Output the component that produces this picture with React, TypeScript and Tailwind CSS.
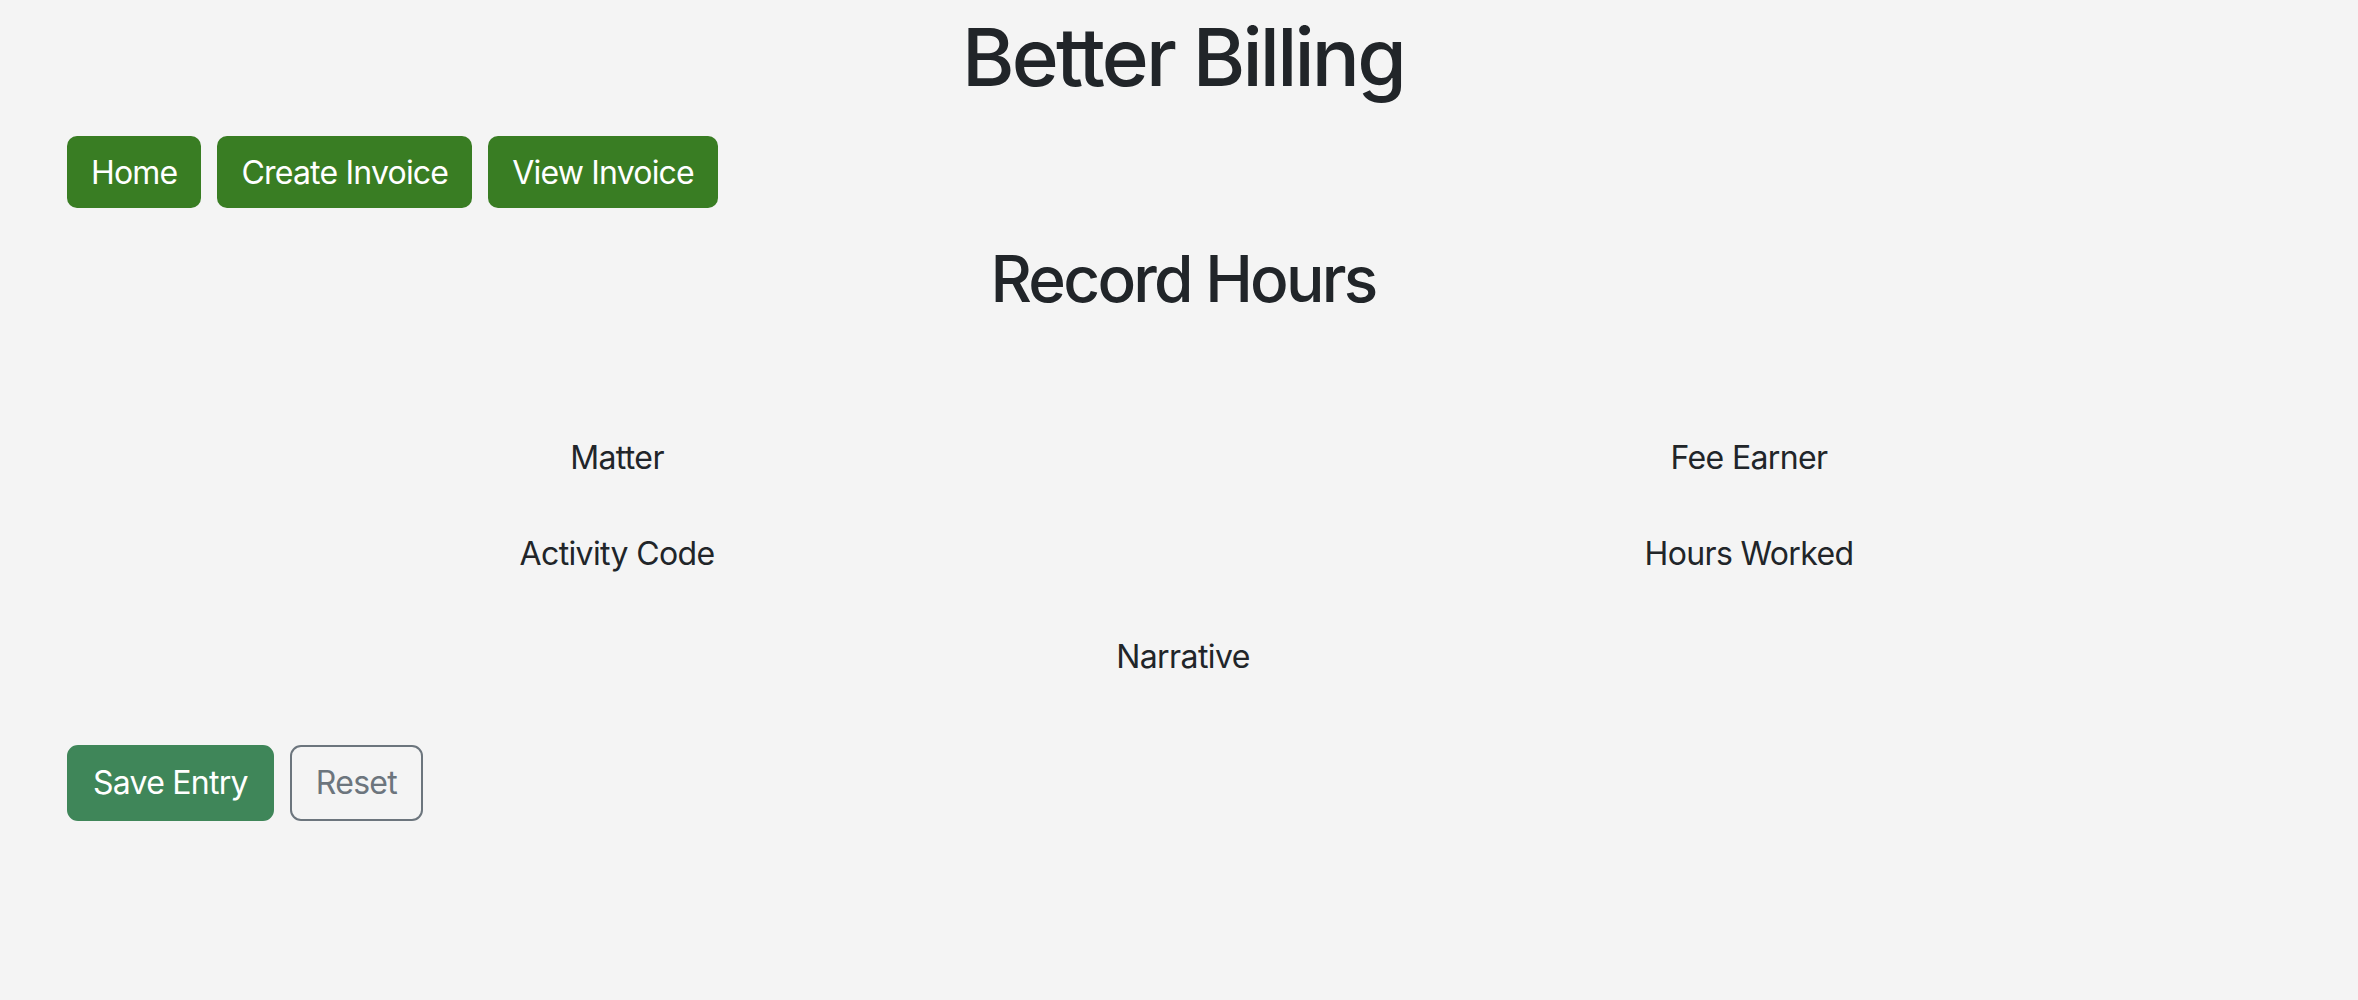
import React from "react";

const font = { fontFamily: "Inter, 'Noto Sans', 'Liberation Sans', sans-serif" };

export default function App() {
  return (
    <div
      className="min-h-screen bg-[#f4f4f4] text-[#212529] pl-[67px] pr-[59px]"
      style={font}
    >
      <h1 className="pt-[9px] mb-[31px] text-center text-[80px] leading-[96px] font-medium tracking-[-0.035em]">
        Better Billing
      </h1>
      <nav className="flex gap-4">
        {["Home", "Create Invoice", "View Invoice"].map((t) => (
          <button
            key={t}
            className="h-[72px] px-6 pt-[2px] rounded-[10px] bg-[#397d23] text-white text-[32px] leading-[48px] tracking-[-0.025em]"
          >
            {t}
          </button>
        ))}
      </nav>
      <h2 className="mt-[32px] text-center text-[64px] leading-[77px] font-medium tracking-[-0.043em]">
        Record Hours
      </h2>
      <div className="mt-[117px] grid grid-cols-2 gap-x-8 gap-y-[48px] text-[32px] leading-[48px] tracking-[-0.02em]">
        <div className="text-center">Matter</div>
        <div className="text-center">Fee Earner</div>
        <div className="text-center">Activity Code</div>
        <div className="text-center">Hours Worked</div>
      </div>
      <div className="mt-[55px] text-center text-[32px] leading-[48px] tracking-[-0.018em]">
        Narrative
      </div>
      <div className="mt-[64px] flex gap-4">
        <button className="px-6 py-3 border-2 border-[#3f8659] rounded-[11px] bg-[#3f8659] text-white text-[32px] leading-[48px] tracking-[-0.023em]">
          Save Entry
        </button>
        <button className="px-6 py-3 border-2 border-[#6c757d] rounded-[11px] bg-transparent text-[#6c757d] text-[32px] leading-[48px] tracking-[-0.023em]">
          Reset
        </button>
      </div>
    </div>
  );
}
